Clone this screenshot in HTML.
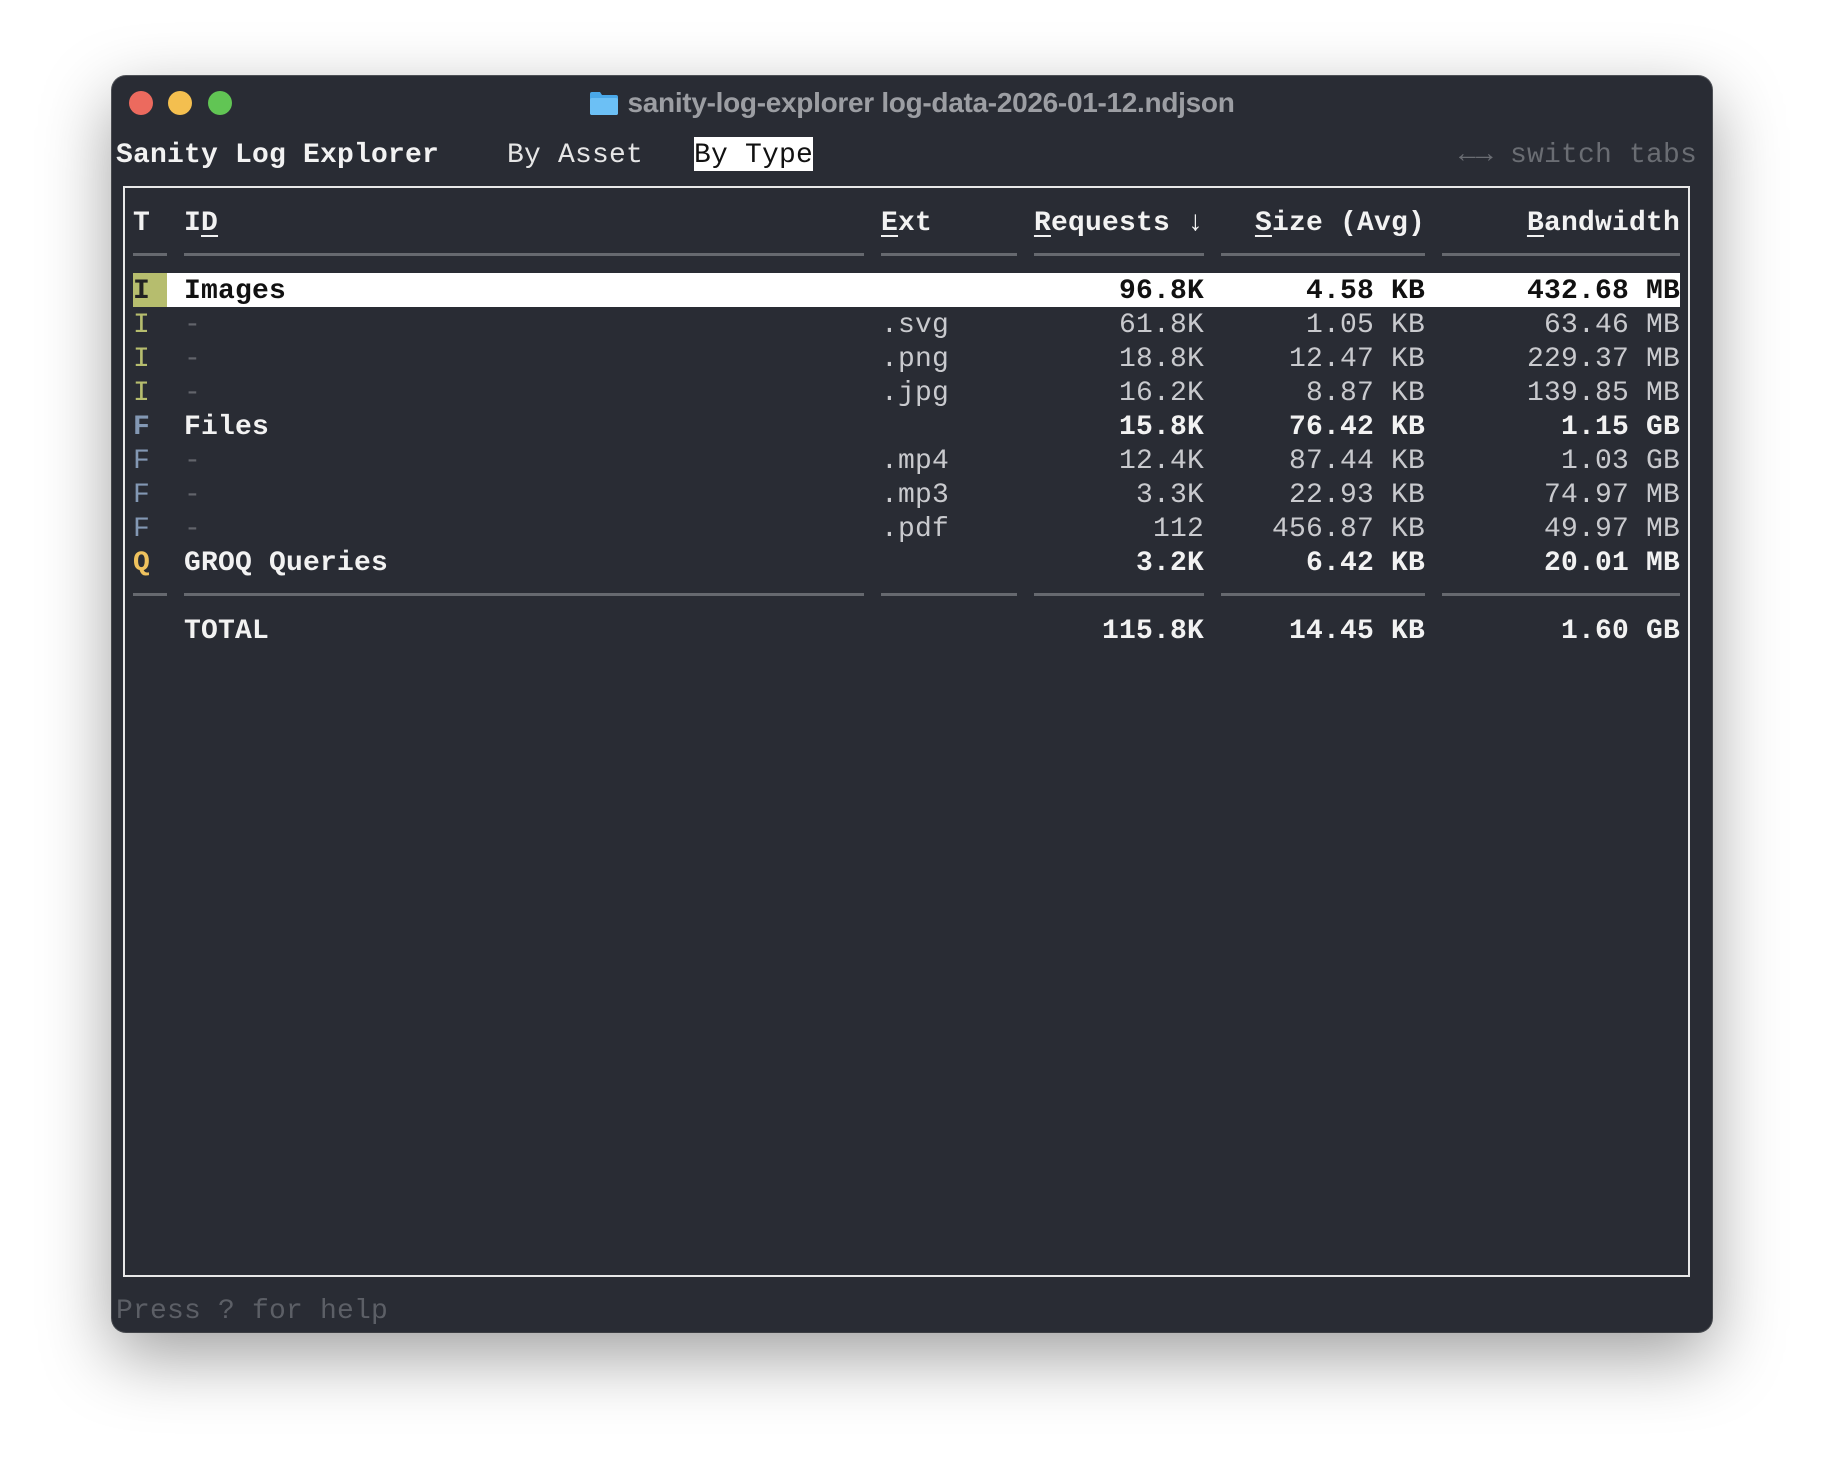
<!DOCTYPE html>
<html><head><meta charset="utf-8"><style>
html,body{margin:0;padding:0;background:#fff;width:1824px;height:1480px;overflow:hidden}
.win{position:absolute;left:112px;top:76px;width:1600px;height:1256px;background:#292c34;border-radius:14px;box-shadow:0 24px 70px rgba(0,0,0,0.38),0 0 0 1px #55585e;overflow:hidden}
.dot{position:absolute;top:15px;width:24px;height:24px;border-radius:50%}
.title{position:absolute;top:10px;left:0;width:1600px;text-align:center;font:bold 28px "Liberation Sans",sans-serif;letter-spacing:-0.3px;color:#9c9ea3;line-height:34px}
.t{position:absolute;margin-top:2px;font-family:"Liberation Mono",monospace;font-size:28px;letter-spacing:0.2px;line-height:34px;height:34px;white-space:pre;color:#e6e6e6}
.b{font-weight:bold;color:#f2f2f2}
.d{color:#c9cace}
.g{color:#62656b}
.u{text-decoration:underline;text-underline-offset:5px;text-decoration-thickness:2px}
.ln{position:absolute;height:3px;background:#66696f}
.hl{position:absolute;background:#fff}
</style></head><body>
<div class="win">
<div class="dot" style="left:17px;background:#ec6a5e"></div>
<div class="dot" style="left:56px;background:#f4bf4f"></div>
<div class="dot" style="left:96px;background:#61c554"></div>
<div class="title"><svg width="30" height="26" viewBox="0 0 30 26" style="vertical-align:-4px;margin-right:8px"><path d="M1 4 Q1 2 3 2 H11 L13 5 H27 Q29 5 29 7 V23 Q29 25 27 25 H3 Q1 25 1 23Z" fill="#4aa8e8"/><rect x="1" y="8" width="28" height="17" rx="2" fill="#6cc0f5"/></svg>sanity-log-explorer log-data-2026-01-12.ndjson</div>
</div>
<div class="t b" style="left:116px;top:137px">Sanity Log Explorer</div>
<div class="t" style="left:507px;top:137px">By Asset</div>
<div class="hl" style="left:694px;top:137px;width:119px;height:34px"></div>
<div class="t" style="left:694px;top:137px;color:#111">By Type</div>
<div class="t g" style="left:1459px;top:137px;color:#6a6d73">←→ switch tabs</div>

<div style="position:absolute;left:123px;top:186px;width:1563px;height:1087px;border:2px solid #e8e8e8"></div>

<div class="t b" style="left:133px;top:205px">T</div>
<div class="t b" style="left:184px;top:205px">I<span class="u">D</span></div>
<div class="t b" style="left:881px;top:205px"><span class="u">E</span>xt</div>
<div class="t b" style="right:620px;top:205px"><span class="u">R</span>equests ↓</div>
<div class="t b" style="right:399px;top:205px"><span class="u">S</span>ize (Avg)</div>
<div class="t b" style="right:144px;top:205px"><span class="u">B</span>andwidth</div>
<div class="ln" style="left:133px;top:253px;width:34px"></div>
<div class="ln" style="left:184px;top:253px;width:680px"></div>
<div class="ln" style="left:881px;top:253px;width:136px"></div>
<div class="ln" style="left:1034px;top:253px;width:170px"></div>
<div class="ln" style="left:1221px;top:253px;width:204px"></div>
<div class="ln" style="left:1442px;top:253px;width:238px"></div>
<div class="ln" style="left:133px;top:593px;width:34px"></div>
<div class="ln" style="left:184px;top:593px;width:680px"></div>
<div class="ln" style="left:881px;top:593px;width:136px"></div>
<div class="ln" style="left:1034px;top:593px;width:170px"></div>
<div class="ln" style="left:1221px;top:593px;width:204px"></div>
<div class="ln" style="left:1442px;top:593px;width:238px"></div>

<div class="hl" style="left:167px;top:273px;width:1513px;height:34px"></div>
<div class="hl" style="left:133px;top:273px;width:34px;height:34px;background:#b6bd6e"></div>
<div class="t b" style="left:133px;top:273px;color:#222">I</div>
<div class="t b" style="left:184px;top:273px;color:#111">Images</div>
<div class="t b" style="right:620px;top:273px;color:#111">96.8K</div>
<div class="t b" style="right:399px;top:273px;color:#111">4.58 KB</div>
<div class="t b" style="right:144px;top:273px;color:#111">432.68 MB</div>

<div class="t" style="left:133px;top:307px;color:#b6bd6e">I</div><div class="t g" style="left:184px;top:307px">-</div><div class="t d" style="left:881px;top:307px">.svg</div><div class="t d" style="right:620px;top:307px">61.8K</div><div class="t d" style="right:399px;top:307px">1.05 KB</div><div class="t d" style="right:144px;top:307px">63.46 MB</div>
<div class="t" style="left:133px;top:341px;color:#b6bd6e">I</div><div class="t g" style="left:184px;top:341px">-</div><div class="t d" style="left:881px;top:341px">.png</div><div class="t d" style="right:620px;top:341px">18.8K</div><div class="t d" style="right:399px;top:341px">12.47 KB</div><div class="t d" style="right:144px;top:341px">229.37 MB</div>
<div class="t" style="left:133px;top:375px;color:#b6bd6e">I</div><div class="t g" style="left:184px;top:375px">-</div><div class="t d" style="left:881px;top:375px">.jpg</div><div class="t d" style="right:620px;top:375px">16.2K</div><div class="t d" style="right:399px;top:375px">8.87 KB</div><div class="t d" style="right:144px;top:375px">139.85 MB</div>
<div class="t b" style="left:133px;top:409px;color:#8398b4">F</div><div class="t b" style="left:184px;top:409px">Files</div><div class="t b" style="right:620px;top:409px">15.8K</div><div class="t b" style="right:399px;top:409px">76.42 KB</div><div class="t b" style="right:144px;top:409px">1.15 GB</div>
<div class="t" style="left:133px;top:443px;color:#8398b4">F</div><div class="t g" style="left:184px;top:443px">-</div><div class="t d" style="left:881px;top:443px">.mp4</div><div class="t d" style="right:620px;top:443px">12.4K</div><div class="t d" style="right:399px;top:443px">87.44 KB</div><div class="t d" style="right:144px;top:443px">1.03 GB</div>
<div class="t" style="left:133px;top:477px;color:#8398b4">F</div><div class="t g" style="left:184px;top:477px">-</div><div class="t d" style="left:881px;top:477px">.mp3</div><div class="t d" style="right:620px;top:477px">3.3K</div><div class="t d" style="right:399px;top:477px">22.93 KB</div><div class="t d" style="right:144px;top:477px">74.97 MB</div>
<div class="t" style="left:133px;top:511px;color:#8398b4">F</div><div class="t g" style="left:184px;top:511px">-</div><div class="t d" style="left:881px;top:511px">.pdf</div><div class="t d" style="right:620px;top:511px">112</div><div class="t d" style="right:399px;top:511px">456.87 KB</div><div class="t d" style="right:144px;top:511px">49.97 MB</div>
<div class="t b" style="left:133px;top:545px;color:#efc25e">Q</div><div class="t b" style="left:184px;top:545px">GROQ Queries</div><div class="t b" style="right:620px;top:545px">3.2K</div><div class="t b" style="right:399px;top:545px">6.42 KB</div><div class="t b" style="right:144px;top:545px">20.01 MB</div>

<div class="t b" style="left:184px;top:613px">TOTAL</div><div class="t b" style="right:620px;top:613px">115.8K</div><div class="t b" style="right:399px;top:613px">14.45 KB</div><div class="t b" style="right:144px;top:613px">1.60 GB</div>

<div class="t" style="left:116px;top:1293px;color:#5c5f66">Press ? for help</div>
</body></html>
